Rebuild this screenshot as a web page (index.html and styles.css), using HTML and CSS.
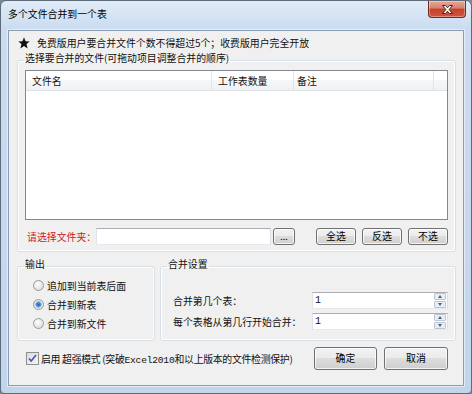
FILE: index.html
```html
<!DOCTYPE html>
<html lang="zh-CN">
<head>
    <meta charset="UTF-8">
    <title>多个文件合并到一个表</title>
    <link rel="stylesheet" href="styles.css">
</head>
<body>
    <div class="window">
        <div class="titlebar">
            <span class="title">多个文件合并到一个表</span>
            <div class="close-btn">
                <svg width="13" height="11" viewBox="0 0 13 11"><path d="M1.5 1.5h3l2 2.3 2-2.3h3l-3.4 4 3.4 4h-3l-2-2.3-2 2.3h-3l3.4-4z" fill="#fff" stroke="#5a1e16" stroke-width="1" stroke-linejoin="round"/></svg>
            </div>
        </div>
        <div class="client">
            <div class="notice">
                <svg class="star" width="12" height="12" viewBox="0 0 12 12"><polygon points="6,0.3 7.5,4.2 11.7,4.4 8.5,7.1 9.6,11.4 6,9 2.4,11.4 3.5,7.1 0.3,4.4 4.5,4.2" fill="#111"/></svg>
                <span>免费版用户要合并文件个数不得超过5个；收费版用户完全开放</span>
            </div>

            <fieldset class="group group-files">
                <legend>选择要合并的文件(可拖动项目调整合并的顺序)</legend>
                <div class="listview">
                    <div class="lv-header">
                        <div class="col col-name">文件名</div>
                        <div class="col col-count">工作表数量</div>
                        <div class="col col-note">备注</div>
                        <div class="col col-rest"></div>
                    </div>
                </div>
                <div class="folder-row">
                    <label class="folder-label">请选择文件夹：</label>
                    <div class="text-input folder-input"></div>
                    <button class="btn btn-browse">...</button>
                    <div class="select-btns">
                        <button class="btn btn-small">全选</button>
                        <button class="btn btn-small">反选</button>
                        <button class="btn btn-small">不选</button>
                    </div>
                </div>
            </fieldset>

            <div class="bottom-row">
                <fieldset class="group group-output">
                    <legend>输出</legend>
                    <div class="radio-row"><span class="radio"></span>追加到当前表后面</div>
                    <div class="radio-row"><span class="radio checked"></span>合并到新表</div>
                    <div class="radio-row"><span class="radio"></span>合并到新文件</div>
                </fieldset>
                <fieldset class="group group-settings">
                    <legend>合并设置</legend>
                    <div class="setting-row">
                        <span class="setting-label">合并第几个表：</span>
                        <div class="text-input spin-input">
                            <span class="spin-value">1</span>
                            <div class="spinner"><span class="spin-up"></span><span class="spin-down"></span></div>
                        </div>
                    </div>
                    <div class="setting-row">
                        <span class="setting-label">每个表格从第几行开始合并：</span>
                        <div class="text-input spin-input">
                            <span class="spin-value">1</span>
                            <div class="spinner"><span class="spin-up"></span><span class="spin-down"></span></div>
                        </div>
                    </div>
                </fieldset>
            </div>

            <div class="footer">
                <div class="check-row">
                    <span class="checkbox">
                        <svg width="11" height="11" viewBox="0 0 11 11"><path d="M2 5.5l2.2 2.6L9 2" fill="none" stroke="#3b5aa8" stroke-width="1.6"/></svg>
                    </span>
                    <span class="check-text">启用 超强模式 (突破<span class="mono">Excel2010</span>和以上版本的文件检测保护)</span>
                </div>
                <div class="dialog-btns">
                    <button class="btn btn-ok">确定</button>
                    <button class="btn btn-cancel">取消</button>
                </div>
            </div>
        </div>
    </div>
</body>
</html>
```

FILE: styles.css
```css
* {
    box-sizing: border-box;
}
body {
    margin: 0;
    background: #7b8896;
    font-family: "Noto Sans CJK SC", "Noto Sans", sans-serif;
    font-size: 9.9px;
    color: #111;
}
.window {
    width: 472px;
    height: 394px;
    border: 1px solid #5d6b7a;
    border-radius: 6px 6px 4px 4px;
    background: linear-gradient(180deg, #e0ebf7 0, #cbdcf0 28px, #c1d5eb 100%);
    padding: 0 7px 7px 7px;
    display: flex;
    flex-direction: column;
}
.titlebar {
    height: 29px;
    display: flex;
    justify-content: space-between;
    align-items: flex-start;
    margin-right: -2px;
}
.title {
    padding-top: 7px;
    line-height: 12px;
    color: #000;
}
.close-btn {
    width: 38px;
    height: 17px;
    border: 1px solid #6e2b22;
    border-top: none;
    border-radius: 0 0 4px 4px;
    background: linear-gradient(180deg, #e9a898 0, #d97f70 45%, #c4412c 50%, #d3543e 100%);
    box-shadow: inset 0 0 0 1px rgba(255,255,255,0.35);
    display: flex;
    align-items: center;
    justify-content: center;
}
.client {
    flex: 1;
    background: #f0f0f0;
    border: 1px solid #8a9db3;
    box-shadow: 0 0 0 1px rgba(255,255,255,0.5);
    display: flex;
    flex-direction: column;
}
.notice {
    display: flex;
    align-items: center;
    height: 12px;
    margin: 6px 0 0 9px;
    gap: 7px;
    line-height: 12px;
}
.group {
    border: 1px solid #d5dfe5;
    border-radius: 3px;
    box-shadow: inset 0 0 0 1px #fff;
    min-width: 0;
}
.group legend {
    padding: 0 1px 4px;
    margin-left: -1px;
    line-height: 12px;
}
.group-files {
    margin: 3px 7px 0 8px;
    padding: 2px 7px 6px;
}
.listview {
    height: 150px;
    border: 1px solid #828790;
    background: #fff;
}
.lv-header {
    display: flex;
    height: 20px;
    background: linear-gradient(180deg, #fff 0, #fff 45%, #f6f7f9 50%, #f0f1f3 100%);
    border-bottom: 1px solid #dfe2e6;
}
.col {
    border-right: 1px solid #e2e4e8;
    padding: 2px 0 0 6px;
    line-height: 17px;
}
.col-name {
    width: 186px;
}
.col-count {
    width: 82px;
}
.col-note {
    width: 140px;
    padding-left: 3px;
}
.col-rest {
    flex: 1;
    border-right: none;
}
.folder-row {
    display: flex;
    align-items: center;
    height: 17px;
    margin-top: 8px;
}
.folder-label {
    flex: none;
    width: 69px;
    margin-left: 2px;
    white-space: nowrap;
    color: #d0181c;
}
.text-input {
    height: 17px;
    background: #fff;
    border: 1px solid #abadb3;
    border-color: #abadb3 #dbdfe6 #e3e9ef #e2e3ea;
}
.folder-input {
    flex: none;
    width: 175px;
}
.btn {
    font: inherit;
    color: #000;
    padding: 0;
    line-height: 1;
    border: 1px solid #707070;
    border-radius: 3px;
    background: linear-gradient(180deg, #f2f2f2 0, #ebebeb 50%, #dddddd 50%, #cfcfcf 100%);
    box-shadow: inset 0 0 0 1px rgba(255,255,255,0.75);
}
.btn-browse {
    width: 22px;
    height: 17px;
    margin-left: 2px;
    font-size: 9px;
}
.select-btns {
    margin-left: auto;
    display: flex;
    gap: 6px;
}
.btn-small {
    width: 40px;
    height: 17px;
}
.bottom-row {
    display: flex;
    gap: 5px;
    margin: 6px 7px 0 8px;
}
.group-output {
    margin: 0;
    width: 138px;
    padding: 2px 7px 6px;
}
.group-settings {
    margin: 0;
    flex: 1;
    padding: 18px 7px 10px;
}
.radio-row {
    display: flex;
    align-items: center;
    height: 19px;
    margin-left: 8px;
    gap: 3px;
}
.radio {
    width: 11px;
    height: 11px;
    border-radius: 50%;
    border: 1px solid #9a9a9a;
    background: radial-gradient(circle at 40% 35%, #fdfdfd 0, #e6e6e6 60%, #d2d2d2 100%);
}
.radio.checked {
    background: radial-gradient(circle at 50% 50%, #1f5fb3 0, #3e82d4 1.5px, #8cbcec 3px, #eaeaea 3.6px, #d6d6d6 100%);
}
.setting-row {
    display: flex;
    align-items: center;
    justify-content: space-between;
    height: 17px;
}
.setting-row + .setting-row {
    margin-top: 4px;
}
.setting-label {
    margin-left: 5px;
}
.spin-input {
    width: 136px;
    display: flex;
    align-items: center;
    justify-content: space-between;
}
.spin-value {
    padding-left: 2px;
    font-family: "Liberation Mono", monospace;
    font-size: 10px;
}
.spinner {
    width: 12px;
    height: 15px;
    display: flex;
    flex-direction: column;
    gap: 1px;
    margin-right: 1px;
}
.spinner span {
    flex: 1;
    border: 1px solid #bcc6d3;
    border-radius: 1px;
    background: #e8edf3;
    display: flex;
    align-items: center;
    justify-content: center;
}
.spin-up::after {
    content: "";
    border-left: 2.5px solid transparent;
    border-right: 2.5px solid transparent;
    border-bottom: 3px solid #4d6185;
}
.spin-down::after {
    content: "";
    border-left: 2.5px solid transparent;
    border-right: 2.5px solid transparent;
    border-top: 3px solid #4d6185;
}
.footer {
    display: flex;
    align-items: center;
    justify-content: space-between;
    height: 23px;
    margin: 6px 15px 0 17px;
}
.check-row {
    display: flex;
    align-items: center;
    gap: 2px;
}
.checkbox {
    width: 13px;
    height: 13px;
    border: 1px solid #8e8f8f;
    background: linear-gradient(135deg, #dcdcdc 0, #f6f6f6 100%);
    display: flex;
    align-items: center;
    justify-content: center;
}
.check-text {
    letter-spacing: -0.3px;
}
.mono {
    font-family: "Liberation Mono", monospace;
    font-size: 9.6px;
    letter-spacing: -0.2px;
}
.dialog-btns {
    display: flex;
    gap: 7px;
}
.btn-ok {
    width: 63px;
    height: 23px;
}
.btn-cancel {
    width: 64px;
    height: 23px;
}
```
